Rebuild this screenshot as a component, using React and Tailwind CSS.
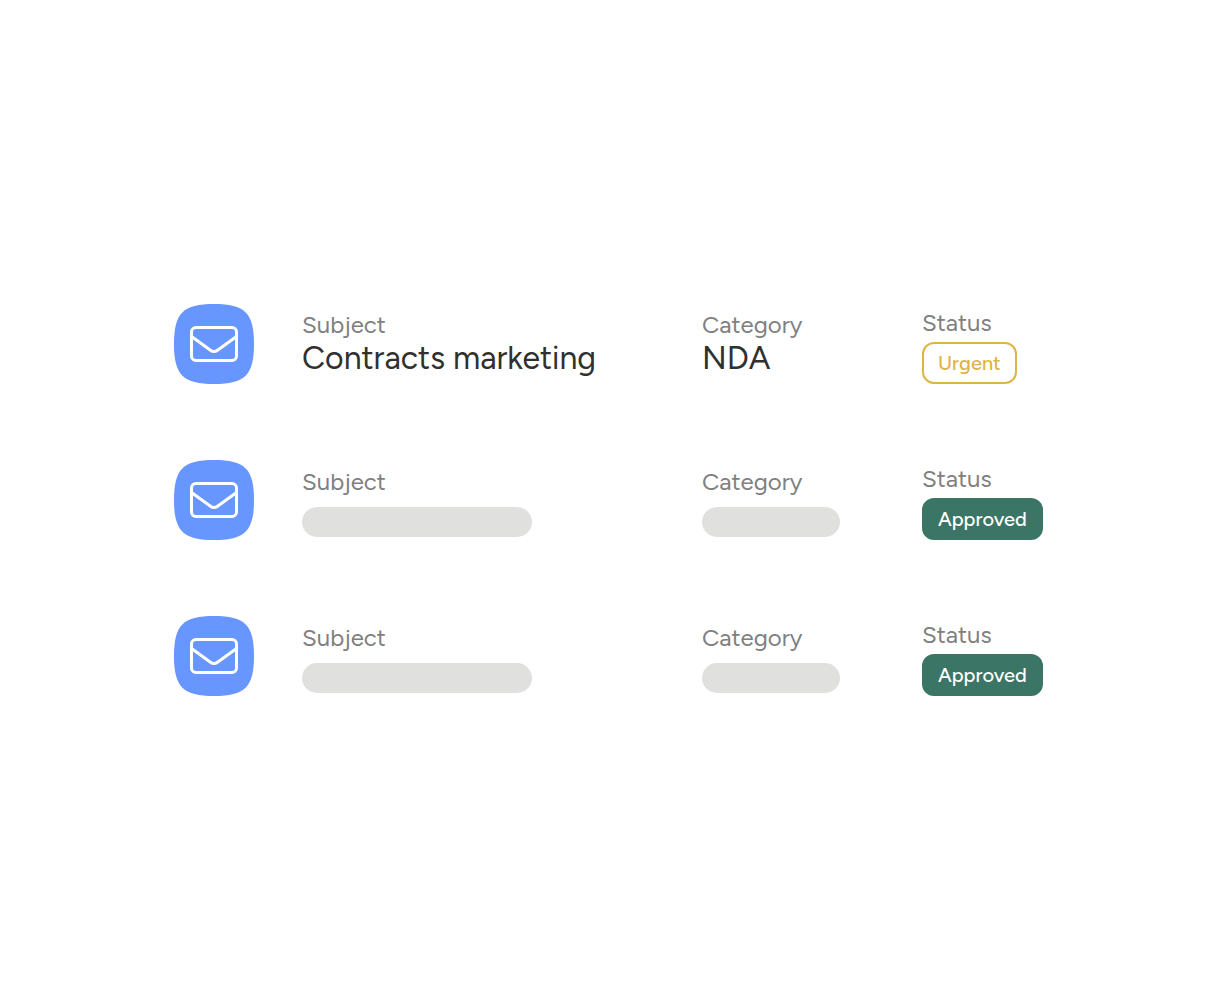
const rows = [
  { id: 1, subject: "Contracts marketing", category: "NDA", status: "Urgent" },
  { id: 2, status: "Approved" },
  { id: 3, status: "Approved" },
];

function MailIcon() {
  return (
    <svg viewBox="0 0 80 80" className="size-20" fill="none" aria-hidden="true">
      <path
        d="M40 0C71 0 80 9 80 40C80 71 71 80 40 80C9 80 0 71 0 40C0 9 9 0 40 0Z"
        fill="#6896ff"
      />
      <rect x="17.5" y="23.5" width="45" height="33" rx="4.5" stroke="#fff" strokeWidth="3" />
      <path
        d="M17.5 32.5L36.5 46.2Q40 48.8 43.5 46.2L62.5 32.5"
        stroke="#fff"
        strokeWidth="3"
      />
    </svg>
  );
}

function Field({ label, value, barClass }) {
  return value ? (
    <div className="flex flex-col pt-1">
      <dt className="text-2xl leading-[34px] text-[#80807f]">{label}</dt>
      <dd className="text-[32px] leading-8 whitespace-nowrap text-[#30302f]">{value}</dd>
    </div>
  ) : (
    <div className="flex flex-col gap-[7px] pt-1">
      <dt className="text-2xl leading-9 text-[#80807f]">{label}</dt>
      <dd className={`h-[30px] rounded-full bg-[#e0e0de] ${barClass}`} />
    </div>
  );
}

function Badge({ status }) {
  const tone =
    status === "Urgent"
      ? "border-[#deb446] text-[#deb446]"
      : "border-[#3a7565] bg-[#3a7565] text-white";
  return (
    <dd
      className={`flex h-[42px] w-fit items-center rounded-xl border-2 px-3.5 text-xl font-medium ${tone}`}
    >
      {status}
    </dd>
  );
}

export default function App() {
  return (
    <main className="flex min-h-screen flex-col justify-center bg-white pr-[172px] pl-[174px] font-['Figtree','Lato',sans-serif]">
      <ul className="flex flex-col gap-[76px]">
        {rows.map((row) => (
          <li key={row.id} className="grid grid-cols-[80px_1fr] gap-12">
            <MailIcon />
            <dl className="grid h-20 grid-cols-[400fr_220fr_121px]">
              <Field label="Subject" value={row.subject} barClass="w-[230px]" />
              <Field label="Category" value={row.category} barClass="w-[138px]" />
              <div className="flex flex-col">
                <dt className="text-2xl leading-[38px] text-[#80807f]">Status</dt>
                <Badge status={row.status} />
              </div>
            </dl>
          </li>
        ))}
      </ul>
    </main>
  );
}
